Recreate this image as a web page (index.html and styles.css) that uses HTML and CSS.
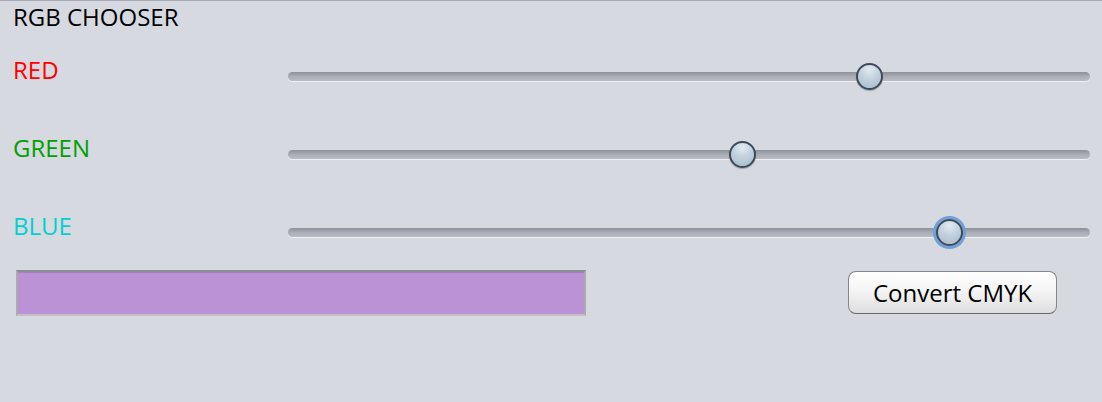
FILE: index.html
```html
<!DOCTYPE html>
<html>
<head>
<meta charset="utf-8">
<link rel="stylesheet" href="styles.css">
</head>
<body>
<div class="panel">
  <div class="title">RGB CHOOSER</div>
  <div class="rows">
    <div class="row">
      <div class="label red">RED</div>
      <div class="slider"><div class="track"></div><div class="thumb" style="left: 72.5%"></div></div>
    </div>
    <div class="row">
      <div class="label green">GREEN</div>
      <div class="slider"><div class="track"></div><div class="thumb" style="left: 56.7%"></div></div>
    </div>
    <div class="row">
      <div class="label blue">BLUE</div>
      <div class="slider"><div class="track"></div><div class="thumb focused" style="left: 82.5%"></div></div>
    </div>
  </div>
  <div class="bottom">
    <div class="swatch" style="background: rgb(187,146,214)"></div>
    <button class="btn">Convert CMYK</button>
  </div>
</div>
</body>
</html>
```

FILE: styles.css
```css
html, body {
  margin: 0;
  padding: 0;
  background: #d6d9e0;
  height: 100%;
}
body {
  font-family: "Open Sans", "DejaVu Sans", sans-serif;
  font-size: 24px;
  color: #000;
}
.panel {
  border-top: 1px solid #a8aab0;
  padding: 0 12px 0 13px;
}
.title {
  height: 32px;
  line-height: 32px;
  margin-bottom: 21px;
}
.rows {
  display: grid;
  grid-auto-rows: 32px;
  row-gap: 46px;
}
.row {
  display: grid;
  grid-template-columns: 275px 1fr;
}
.label {
  line-height: 32px;
}
.red { color: #ff0000; }
.green { color: #00a000; }
.blue { color: #00d0d0; }
.slider {
  position: relative;
  height: 32px;
}
.track {
  margin-top: 18px;
  height: 9px;
  border-radius: 5px;
  background: linear-gradient(#8c9099, #a9adb6 50%, #b9bcc4);
  box-shadow: 0 1px 0 #eef0f4;
}
.thumb {
  position: absolute;
  top: 9px;
  width: 23px;
  height: 23px;
  margin-left: -13.5px;
  border-radius: 50%;
  border: 2px solid #3b4b5b;
  background: radial-gradient(circle at 50% 20%, #e2eaf2 0%, #c2d1de 45%, #a6bacc 100%);
  box-shadow: 0 1px 1px rgba(0,0,0,0.25);
}
.thumb.focused {
  box-shadow: 0 0 0 3px #6fa1d6;
}
.bottom {
  display: flex;
  justify-content: space-between;
  align-items: flex-start;
  margin-top: 28px;
}
.swatch {
  margin-left: 3px;
  width: 566px;
  height: 42px;
  border-top: 2px solid #8e8e90;
  border-left: 2px solid #acacae;
  border-right: 2px solid #acacae;
  border-bottom: 2px solid #c2c2c4;
  box-shadow: inset 0 1px 0 #a880c2;
}
.btn {
  margin-right: 33px;
  margin-top: 1px;
  width: 209px;
  height: 43px;
  border: 1px solid #86868a;
  border-bottom-color: #68686c;
  border-radius: 8px;
  background: linear-gradient(#ffffff, #f3f3f3 50%, #dedede);
  font-family: "Open Sans", "DejaVu Sans", sans-serif;
  font-size: 24px;
  color: #000;
  padding: 0;
  line-height: 40px;
}
```
